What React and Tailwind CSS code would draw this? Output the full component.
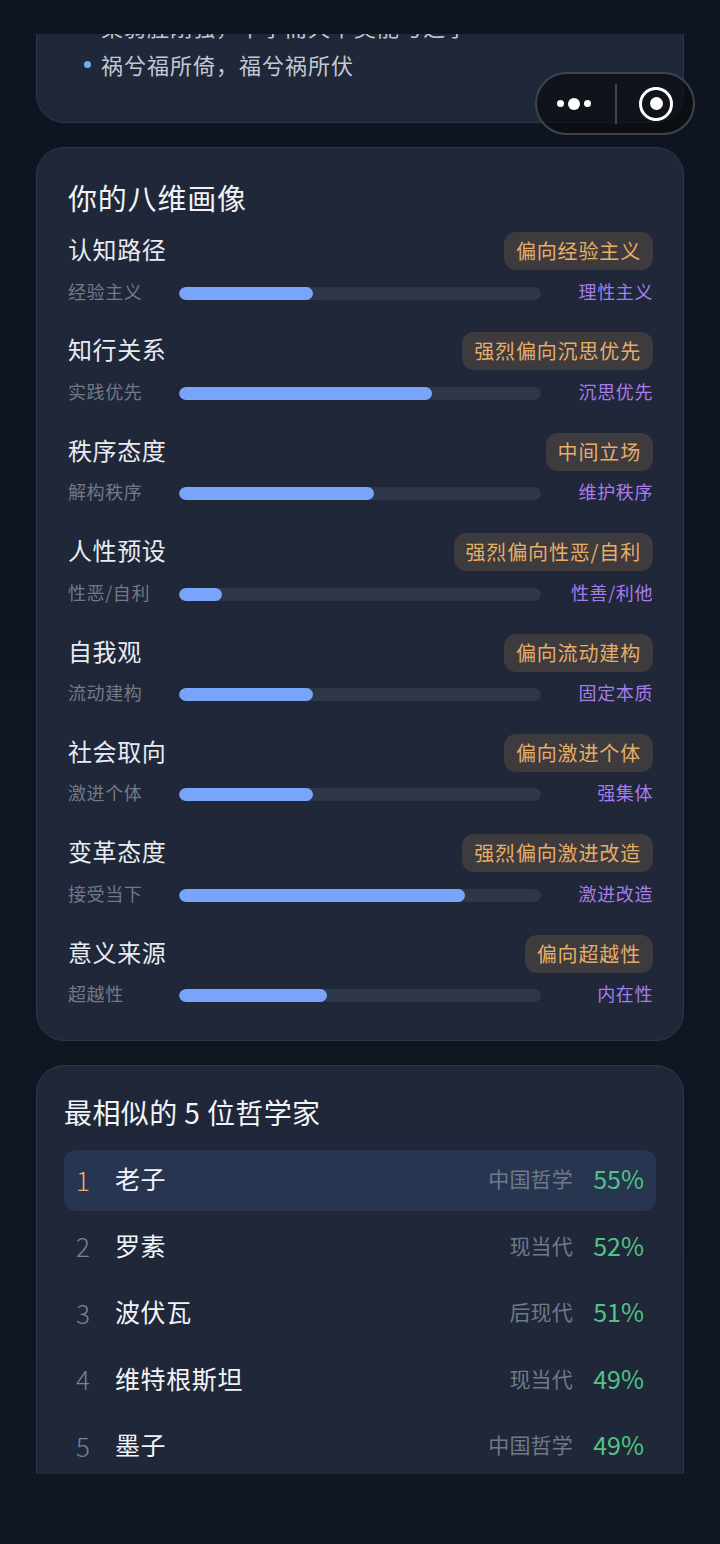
import React from 'react';

const font = { fontFamily: '"Noto Sans CJK SC", "Noto Sans", sans-serif' };

const dims = [
  { name: '认知路径', tag: '偏向经验主义', left: '经验主义', right: '理性主义', pct: 37 },
  { name: '知行关系', tag: '强烈偏向沉思优先', left: '实践优先', right: '沉思优先', pct: 70 },
  { name: '秩序态度', tag: '中间立场', left: '解构秩序', right: '维护秩序', pct: 54 },
  { name: '人性预设', tag: '强烈偏向性恶/自利', left: '性恶/自利', right: '性善/利他', pct: 12 },
  { name: '自我观', tag: '偏向流动建构', left: '流动建构', right: '固定本质', pct: 37 },
  { name: '社会取向', tag: '偏向激进个体', left: '激进个体', right: '强集体', pct: 37 },
  { name: '变革态度', tag: '强烈偏向激进改造', left: '接受当下', right: '激进改造', pct: 79 },
  { name: '意义来源', tag: '偏向超越性', left: '超越性', right: '内在性', pct: 41 },
];

const people = [
  { rank: 1, name: '老子', school: '中国哲学', score: '55%' },
  { rank: 2, name: '罗素', school: '现当代', score: '52%' },
  { rank: 3, name: '波伏瓦', school: '后现代', score: '51%' },
  { rank: 4, name: '维特根斯坦', school: '现当代', score: '49%' },
  { rank: 5, name: '墨子', school: '中国哲学', score: '49%' },
];

function DimRow({ d }) {
  return (
    <div className="h-[100.4px]">
      <div className="flex h-[38px] items-center justify-between">
        <span className="-mt-[2px] text-[24px] tracking-[0.6px] text-[#e8ebf1]">{d.name}</span>
        <span className="mt-[2px] rounded-xl bg-[#3d3b3e] px-3 py-1 text-[20px] leading-[30px] tracking-[0.85px] text-[#e6ad66]">{d.tag}</span>
      </div>
      <div className="mt-[6px] flex h-[32px] items-center">
        <span className="w-[111px] text-[18px] tracking-[0.6px] text-[#717987]">{d.left}</span>
        <div className="mt-[4px] h-[13px] w-[362px] overflow-hidden rounded-full bg-[#2d3748]">
          <div className="h-full rounded-full bg-[#78a4fa]" style={{ width: `${d.pct}%` }} />
        </div>
        <span className="flex-1 text-right text-[18px] tracking-[0.6px] text-[#a67cec]">{d.right}</span>
      </div>
    </div>
  );
}

function PersonRow({ p }) {
  const first = p.rank === 1;
  return (
    <div className={`flex h-[61px] items-center rounded-xl px-3 pb-[3px] ${first ? 'bg-[#273550]' : ''}`}>
      <span className={`w-[39px] text-[26px] font-light ${first ? 'text-[#eab069]' : 'text-[#7a8291]'}`}>{p.rank}</span>
      <span className="flex-1 text-[25px] tracking-[0.6px] text-[#f1f3f7]">{p.name}</span>
      <span className="text-[21px] tracking-[0.2px] text-[#717987]">{p.school}</span>
      <span className="w-[71px] text-right text-[25px] text-[#4fc483]">{p.score}</span>
    </div>
  );
}

export default function App() {
  return (
    <div className="relative h-[1544px] w-[720px] overflow-hidden bg-linear-to-b from-[#0e1521] to-[#111722]" style={font}>
      <div className="mt-[34px] h-[1440px] overflow-hidden px-9">
        <div className="-mt-[60px] h-[149px] rounded-[28px] border border-[#2d3648] bg-[#1f2739] pl-[64px] pt-[32px]">
          <div className="flex h-[38px] items-center text-[22px] tracking-[1px] text-[#c3c9d3]">
            <span>柔弱胜刚强，不争而天下莫能与之争</span>
          </div>
          <div className="relative flex h-[38px] items-center text-[22px] tracking-[1px] text-[#c3c9d3]">
            <span className="absolute -left-[17px] h-[7px] w-[7px] rounded-full bg-[#6fb0ea]" />
            <span>祸兮福所倚，福兮祸所伏</span>
          </div>
        </div>

        <div className="mt-[24px] h-[894px] rounded-[28px] border border-[#2d3648] bg-[#1f2739] pl-[31px] pr-[30px] pt-[28px]">
          <h2 className="mb-[9px] h-[46px] text-[29px] leading-[42px] tracking-[0.8px] text-[#f1f3f7]">你的八维画像</h2>
          {dims.map((d) => (
            <DimRow key={d.name} d={d} />
          ))}
        </div>

        <div className="mt-[24px] rounded-t-[28px] border-x border-t border-[#2d3648] bg-[#1f2739] px-[27px] pb-[40px] pt-[25px]">
          <h2 className="mb-[15px] h-[44px] text-[28px] leading-[42px] tracking-[0.4px] text-[#f1f3f7]">最相似的 5 位哲学家</h2>
          <div className="flex flex-col gap-[5.5px]">
            {people.map((p) => (
              <PersonRow key={p.rank} p={p} />
            ))}
          </div>
        </div>
      </div>

      <div className="absolute left-[535px] top-[72px] flex h-[63px] w-[160px] items-center rounded-full border-2 border-[#3e434c] bg-[#0b0c10]/70">
        <div className="flex w-[78px] items-center justify-center gap-[4px] pr-[4px]">
          <span className="h-[7px] w-[7px] rounded-full bg-white" />
          <span className="h-[12px] w-[12px] rounded-full bg-white" />
          <span className="h-[7px] w-[7px] rounded-full bg-white" />
        </div>
        <div className="h-[40px] w-[2px] bg-[#3e434c]" />
        <div className="flex flex-1 items-center justify-center pl-[2px]">
          <span className="flex h-[34px] w-[34px] items-center justify-center rounded-full border-[3.5px] border-white">
            <span className="h-[13px] w-[13px] rounded-full bg-white" />
          </span>
        </div>
      </div>
    </div>
  );
}
